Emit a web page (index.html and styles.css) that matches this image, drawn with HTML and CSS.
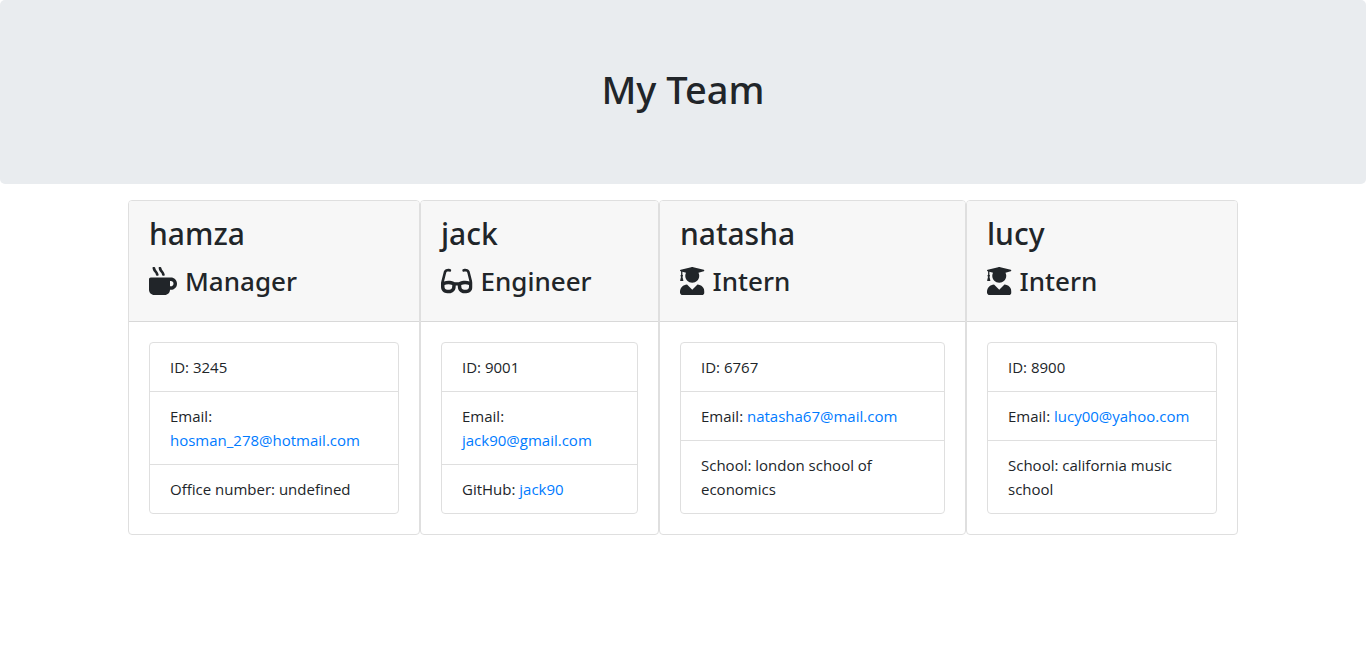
FILE: index.html
```html
<!DOCTYPE html>
<html lang="en">
<head>
<meta charset="utf-8">
<meta name="viewport" content="width=device-width, initial-scale=1">
<title>My Team</title>
<link rel="stylesheet" href="styles.css">
</head>
<body>
<svg class="sprite" aria-hidden="true">
  <symbol id="mug" viewBox="0 0 512 512"><path d="M127.100 146.500c1.300 7.700 8 13.500 16 13.500h16.500c9.800 0 17.600-8.500 16.300-18-3.800-28.200-16.400-54.200-36.600-74.700-14.400-14.700-23.600-33.300-26.400-53.500C111.800 5.900 105 0 96.800 0H80.400C70.600 0 63 8.500 64.100 18c3.900 31.900 18 61.300 40.600 84.400 12 12.200 19.700 27.500 22.400 44.100zm112 0c1.300 7.700 8 13.500 16 13.500h16.500c9.800 0 17.600-8.500 16.300-18-3.800-28.200-16.400-54.200-36.600-74.700-14.400-14.700-23.600-33.300-26.400-53.500C223.800 5.900 217 0 208.800 0h-16.400c-9.800 0-17.500 8.500-16.300 18 3.900 31.900 18 61.300 40.600 84.400 12 12.200 19.700 27.500 22.400 44.100zM400 192H32c-17.700 0-32 14.300-32 32v192c0 53 43 96 96 96h192c53 0 96-43 96-96h16c61.800 0 112-50.200 112-112s-50.200-112-112-112zm0 160h-16v-96h16c26.500 0 48 21.500 48 48s-21.500 48-48 48z"/></symbol>
  <symbol id="glasses" viewBox="0 0 576 512"><path d="M574.100 280.370L528.750 98.660c-5.910-23.700-21.590-44.050-43-55.810-21.440-11.730-46.970-14.110-70.190-6.330l-15.250 5.080c-8.390 2.790-12.920 11.860-10.120 20.240l5.060 15.180c2.790 8.380 11.850 12.910 20.230 10.120l13.180-4.390c10.870-3.620 23-3.570 33.160 1.730 10.290 5.370 17.570 14.560 20.370 25.820l38.460 153.820c-22.190-6.810-49.790-12.460-81.200-12.460-34.770 0-73.980 7.020-114.850 26.740h-73.180c-40.870-19.740-80.080-26.750-114.860-26.750-31.420 0-59.020 5.650-81.210 12.460l38.460-153.830c2.790-11.250 10.090-20.450 20.380-25.810 10.160-5.300 22.280-5.350 33.150-1.730l13.170 4.390c8.380 2.790 17.440-1.740 20.230-10.120l5.060-15.180c2.800-8.380-1.730-17.450-10.120-20.240l-15.250-5.080c-23.220-7.780-48.750-5.410-70.190 6.330-21.410 11.770-37.090 32.110-43 55.800L1.900 280.370A64.218 64.218 0 0 0 0 295.860v70.250C0 429.010 51.580 480 115.200 480h37.120c60.280 0 110.370-45.940 114.880-105.370l2.930-38.630h35.750l2.930 38.630C313.310 434.060 363.400 480 423.680 480h37.120c63.620 0 115.200-50.990 115.200-113.880v-70.250c0-5.230-.64-10.430-1.900-15.500zm-370.720 89.420c-1.970 25.910-24.400 46.210-51.060 46.210H115.200C86.970 416 64 393.620 64 366.110v-37.540c18.120-6.490 43.420-12.920 72.580-12.920 23.860 0 47.260 4.330 69.930 12.920l-3.130 41.220zM512 366.120c0 27.510-22.970 49.880-51.200 49.880h-37.120c-26.670 0-49.100-20.300-51.060-46.210l-3.130-41.220c22.670-8.590 46.080-12.920 69.950-12.920 29.170 0 54.480 6.430 72.560 12.930v37.540z"/></symbol>
  <symbol id="graduate" viewBox="0 0 448 512"><path d="M319.400 320.600L224 416l-95.400-95.400C57.100 323.700 0 382.200 0 454.400v9.600c0 26.500 21.500 48 48 48h352c26.500 0 48-21.500 48-48v-9.600c0-72.200-57.100-130.700-128.600-133.800zM13.600 79.800l6.400 1.500v58.400c-7 4.200-12 11.500-12 20.300 0 8.400 4.600 15.400 11.100 19.700L3.500 242c-1.700 6.900 2.100 14 7.600 14h41.800c5.500 0 9.300-7.100 7.600-14l-15.600-62.300C51.400 175.400 56 168.400 56 160c0-8.800-5-16.100-12-20.300V87.100l66 15.900c-8.600 17.200-14 36.400-14 57 0 70.700 57.300 128 128 128s128-57.300 128-128c0-20.600-5.300-39.800-14-57l96.300-23.200c18.200-4.400 18.200-27.100 0-31.500l-190.400-46c-13-3.100-26.700-3.100-39.700 0L13.600 48.200c-18.100 4.400-18.100 27.200 0 31.600z"/></symbol>
</svg>
<header class="banner"><h1>My Team</h1></header>
<main class="team">
  <section class="card">
    <div class="card-header">
      <h2>hamza</h2>
      <h3><svg class="icon" viewBox="0 0 512 512" aria-hidden="true"><use href="#mug"/></svg>Manager</h3>
    </div>
    <ul class="details">
      <li>ID: 3245</li>
      <li>Email: <a href="mailto:hosman_278@hotmail.com">hosman_278@hotmail.com</a></li>
      <li>Office number: undefined</li>
    </ul>
  </section>
  <section class="card">
    <div class="card-header">
      <h2>jack</h2>
      <h3><svg class="icon" viewBox="0 0 576 512" aria-hidden="true"><use href="#glasses"/></svg>Engineer</h3>
    </div>
    <ul class="details">
      <li>ID: 9001</li>
      <li>Email: <a href="mailto:jack90@gmail.com">jack90@gmail.com</a></li>
      <li>GitHub: <a href="https://github.com/jack90">jack90</a></li>
    </ul>
  </section>
  <section class="card">
    <div class="card-header">
      <h2>natasha</h2>
      <h3><svg class="icon" viewBox="0 0 448 512" aria-hidden="true"><use href="#graduate"/></svg>Intern</h3>
    </div>
    <ul class="details">
      <li>ID: 6767</li>
      <li>Email: <a href="mailto:natasha67@mail.com">natasha67@mail.com</a></li>
      <li>School: london school of economics</li>
    </ul>
  </section>
  <section class="card">
    <div class="card-header">
      <h2>lucy</h2>
      <h3><svg class="icon" viewBox="0 0 448 512" aria-hidden="true"><use href="#graduate"/></svg>Intern</h3>
    </div>
    <ul class="details">
      <li>ID: 8900</li>
      <li>Email: <a href="mailto:lucy00@yahoo.com">lucy00@yahoo.com</a></li>
      <li>School: california music school</li>
    </ul>
  </section>
</main>
</body>
</html>
```
FILE: styles.css
```css
* { box-sizing: border-box; }

body {
  margin: 0;
  background: #fff;
  color: #212529;
  font-family: "Open Sans", "Noto Sans", sans-serif;
  font-size: 15px;
  line-height: 24px;
}

.sprite { display: none; }

h1, h2, h3 {
  margin: 0;
  font-family: "Noto Sans", "Open Sans", sans-serif;
  font-weight: 500;
}

.banner {
  margin-bottom: 16px;
  padding: 65px 32px 71px;
  border-radius: 5px;
  background: #e9ecef;
  text-align: center;
}

h1 { font-size: 38px; line-height: 48px; }
h2 { font-size: 30px; line-height: 38px; }

h3 {
  display: flex;
  align-items: center;
  gap: 8px;
  font-size: 26px;
  line-height: 34px;
}

.icon {
  height: 28px;
  fill: currentColor;
}

.team {
  display: grid;
  grid-template-columns: 292fr 239fr 307fr 272fr;
  max-width: 1110px;
  margin: 0 auto;
}

.card {
  border: 1px solid #dfdfdf;
  border-radius: 4px;
  overflow: hidden;
}

.card-header {
  display: grid;
  gap: 11px;
  padding: 14px 20px 23px;
  border-bottom: 1px solid #d8d8d8;
  background: #f7f7f7;
}

.details {
  margin: 20px;
  padding: 0;
  border: 1px solid #dfdfdf;
  border-radius: 4px;
  list-style: none;
}

.details li { padding: 12px 20px; }
.details li + li { border-top: 1px solid #dfdfdf; }

a { color: #007bff; text-decoration: none; }
a:hover { text-decoration: underline; }

@media (max-width: 900px) {
  .team { grid-template-columns: 1fr 1fr; }
}

@media (max-width: 540px) {
  .team { grid-template-columns: 1fr; }
}
```
